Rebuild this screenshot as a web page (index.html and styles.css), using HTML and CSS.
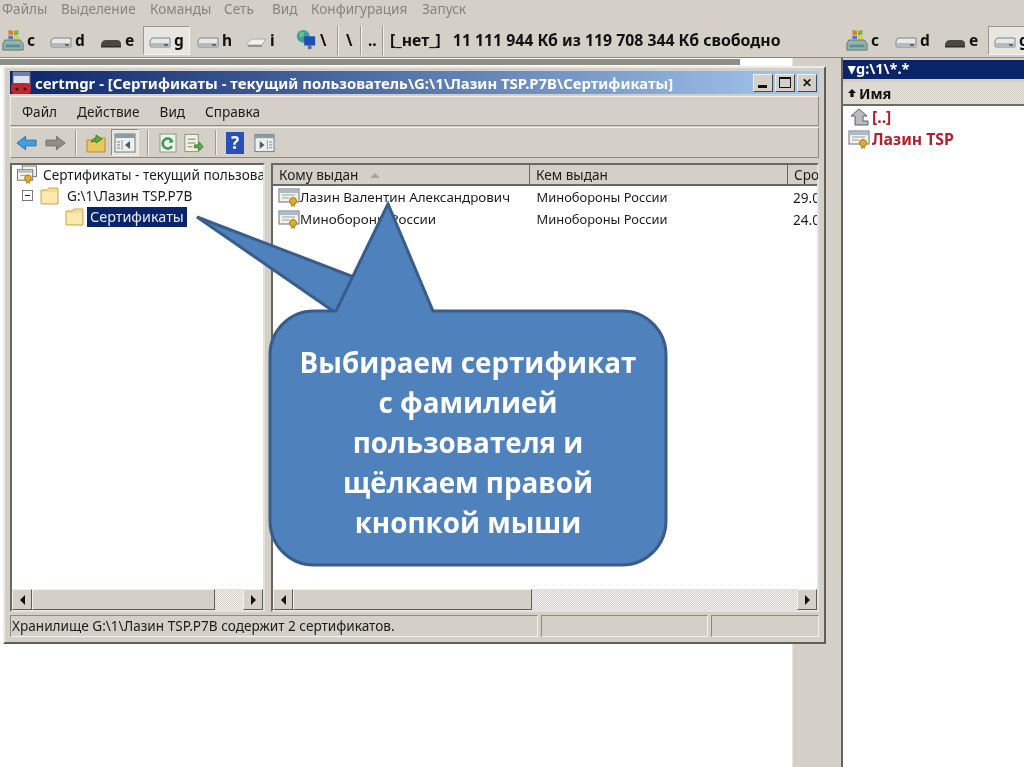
FILE: index.html
```html
<!DOCTYPE html>
<html lang="ru">
<head>
  <meta charset="UTF-8">
  <title>certmgr</title>
  <link rel="stylesheet" href="styles.css">
</head>
<body>

  <!-- иконки -->
  <svg class="defs" width="0" height="0">
    <symbol id="ic-drive" viewBox="0 0 22 12">
      <path d="M1 4 L3 1 H21 V10 H2 L1 9 Z" fill="#e8e8e4" stroke="#7d8488"/>
      <rect x="2" y="6" width="19" height="4" fill="#b4bbc0"/>
      <rect x="15" y="7" width="4" height="2" fill="#5d6f78"/>
    </symbol>
    <symbol id="ic-flat" viewBox="0 0 22 12">
      <path d="M1 7 L7 2 H21 L17 8 H3 Z" fill="#eef0ee" stroke="#a5adb0"/>
      <path d="M3 9 H17" stroke="#8d9598" stroke-width="2"/>
    </symbol>
    <symbol id="ic-dark" viewBox="0 0 22 12">
      <path d="M2 5 Q3 3 6 3 H17 Q20 3 21 6 V10 H1 V7 Z" fill="#4a4845"/>
      <rect x="1" y="9" width="20" height="1.5" fill="#2e2c2a"/>
    </symbol>
    <symbol id="ic-win" viewBox="0 0 24 24">
      <path d="M7 1 L12 2 V7 L7 6 Z" fill="#d9803a"/>
      <path d="M13 2 L18 1 V6 L13 7 Z" fill="#7fb04a"/>
      <path d="M7 7 L12 8 V11 L7 11 Z" fill="#4a7ec2"/>
      <path d="M13 8 L18 7 V11 H13 Z" fill="#e8c24a"/>
      <path d="M3 12 H20 L23 16 V23 H1 V16 Z" fill="#93b4a8" stroke="#55776c"/>
      <rect x="4" y="17" width="16" height="3" fill="#5d8aa0"/>
    </symbol>
    <symbol id="ic-cert" viewBox="0 0 22 19">
      <rect x="1" y="1" width="20" height="13" fill="#f4f2e6" stroke="#6b7378"/>
      <rect x="2" y="2" width="18" height="3" fill="#a9bccb"/>
      <path d="M4 7 H17 M4 10 H11" stroke="#98a0a4"/>
      <circle cx="15" cy="13" r="3.5" fill="#e2ad2e" stroke="#a87a14"/>
      <path d="M13 16 V19 L15 18 L17 19 V16" fill="#c8922a"/>
    </symbol>
    <symbol id="ic-certs" viewBox="0 0 22 20">
      <rect x="6" y="1" width="15" height="11" fill="#f4f2e6" stroke="#6b7378"/>
      <rect x="1" y="5" width="16" height="11" fill="#f4f2e6" stroke="#6b7378"/>
      <rect x="2" y="6" width="14" height="2" fill="#a9bccb"/>
      <path d="M4 11 H13" stroke="#98a0a4"/>
      <circle cx="12" cy="14" r="3.5" fill="#e2ad2e" stroke="#a87a14"/>
      <path d="M10 17 V20 L12 19 L14 20 V17" fill="#c8922a"/>
    </symbol>
    <symbol id="ic-folder" viewBox="0 0 20 18">
      <path d="M1 3 H7 L9 1 H18 V17 H1 Z" fill="#f6dc8e" stroke="#c9ab5c"/>
      <path d="M2 5 H17 V16 H2 Z" fill="#fbe9ad"/>
    </symbol>
    <symbol id="ic-pane-l" viewBox="0 0 22 20">
      <rect x="1" y="1" width="20" height="18" fill="#eef0ee" stroke="#6f7c85"/>
      <rect x="1" y="1" width="20" height="4" fill="#8d9ba5"/>
      <path d="M8 7 V17" stroke="#8d9ba5"/>
      <path d="M3 9 H6 M3 12 H6 M3 15 H6" stroke="#6f7c85"/>
      <path d="M16 8 V16 L11 12 Z" fill="#4d5a63"/>
    </symbol>
    <symbol id="ic-pane-r" viewBox="0 0 22 20">
      <rect x="1" y="1" width="20" height="18" fill="#eef0ee" stroke="#6f7c85"/>
      <rect x="1" y="1" width="20" height="4" fill="#8d9ba5"/>
      <path d="M14 7 V17" stroke="#8d9ba5"/>
      <path d="M16 9 H19 M16 12 H19 M16 15 H19" stroke="#6f7c85"/>
      <path d="M6 8 V16 L11 12 Z" fill="#4d5a63"/>
    </symbol>
  </svg>

  <div class="desktop">
    <div class="top">
      <div class="menu">
        <span>Файлы</span><span>Выделение</span><span>Команды</span><span>Сеть</span><span>Вид</span><span>Конфигурация</span><span>Запуск</span>
      </div>
      <div class="drives">
        <div class="drive-set">
          <div class="drive d-c"><svg class="ic-win"><use href="#ic-win"/></svg>c</div>
          <div class="drive d-d"><svg class="ic-drv"><use href="#ic-drive"/></svg>d</div>
          <div class="drive d-e"><svg class="ic-drv"><use href="#ic-dark"/></svg>e</div>
          <div class="drive d-g active"><svg class="ic-drv"><use href="#ic-drive"/></svg>g</div>
          <div class="drive d-h"><svg class="ic-drv"><use href="#ic-drive"/></svg>h</div>
          <div class="drive d-i"><svg class="ic-drv"><use href="#ic-flat"/></svg>i</div>
          <div class="drive d-net">
            <svg class="ic-net" viewBox="0 0 24 24">
              <circle cx="9" cy="8" r="7" fill="#3aa0a8"/>
              <path d="M5 4 L10 3 L9 8 L5 9 Z" fill="#7cc46a"/>
              <rect x="10" y="8" width="12" height="10" fill="#1d4fb0"/>
              <rect x="14" y="18" width="4" height="4" fill="#5a6f8a"/>
            </svg>\
          </div>
          <i class="sep"></i>
          <div class="drive d-root">\</div>
          <i class="sep"></i>
          <div class="drive d-up">..</div>
          <i class="sep"></i>
          <div class="free">[_нет_]</div>
          <div class="free free-size">11 111 944 Кб из 119 708 344 Кб свободно</div>
        </div>
        <div class="drive-set right-set">
          <div class="drive d-c"><svg class="ic-win"><use href="#ic-win"/></svg>c</div>
          <div class="drive d-d2"><svg class="ic-drv"><use href="#ic-drive"/></svg>d</div>
          <div class="drive d-e2"><svg class="ic-drv"><use href="#ic-dark"/></svg>e</div>
          <div class="drive d-g2 active"><svg class="ic-drv"><use href="#ic-drive"/></svg>g</div>
        </div>
      </div>
    </div>

    <div class="panels">
      <div class="panel-left"><div class="tab-strip"></div></div>
      <div class="panel-gap"></div>
      <div class="panel-right">
        <div class="path-bar">▾g:\1\*.*</div>
        <div class="name-head"><svg class="name-arrow" viewBox="0 0 10 12"><path d="M5 1 L10 6 H7 V11 H3 V6 H0 Z" fill="#111"/></svg>Имя</div>
        <div class="file-row"><svg class="ic-up" viewBox="0 0 20 18"><path d="M10 1 L18 8 H14 V13 H19 V17 H6 V8 H2 Z" fill="#b8bcbc" stroke="#5b6063"/></svg>[..]</div>
        <div class="file-row"><svg class="ic-cert"><use href="#ic-cert"/></svg>Лазин TSP</div>
      </div>
    </div>

    <!-- окно certmgr -->
    <div class="window">
      <div class="title">
        <svg class="title-icon" viewBox="0 0 24 24">
          <rect x="3" y="1" width="17" height="14" fill="#dfe4ea" stroke="#5e6c80"/>
          <rect x="3" y="1" width="17" height="4" fill="#6d84a8"/>
          <rect x="1" y="12" width="20" height="11" rx="4" fill="#c4242c"/>
          <circle cx="7" cy="18" r="1.5" fill="#222"/>
          <circle cx="15" cy="18" r="1.5" fill="#222"/>
        </svg>
        <span class="title-text">certmgr - [Сертификаты - текущий пользователь\G:\1\Лазин TSP.P7B\Сертификаты]</span>
        <div class="title-btns">
          <div class="tbtn"><i class="tb-min"></i></div>
          <div class="tbtn"><i class="tb-max"></i></div>
          <div class="tbtn tbtn-close">✕</div>
        </div>
      </div>

      <div class="win-menu">
        <span>Файл</span><span>Действие</span><span>Вид</span><span>Справка</span>
      </div>

      <div class="win-tools">
        <svg class="t-arrow" viewBox="0 0 22 18"><path d="M1 9 L10 2 V6 H21 V12 H10 V16 Z" fill="#3f9fe0" stroke="#2b6ea8"/></svg>
        <svg class="t-arrow" viewBox="0 0 22 18"><path d="M21 9 L12 2 V6 H1 V12 H12 V16 Z" fill="#8f8f8b" stroke="#6c6c68"/></svg>
        <i class="t-sep"></i>
        <svg class="t-icon" viewBox="0 0 20 20"><path d="M1 7 H8 L10 5 H19 V19 H1 Z" fill="#e9c65e" stroke="#b08f36"/><path d="M5 9 Q7 5 10 5 V2 L16 6 L10 10 V8 Q8 8 5 9 Z" fill="#5fa83c" stroke="#3f7a26"/></svg>
        <div class="t-pressed"><svg class="t-icon-in"><use href="#ic-pane-l"/></svg></div>
        <i class="t-sep"></i>
        <svg class="t-icon" viewBox="0 0 20 20"><rect x="2" y="1" width="16" height="18" fill="#eef2ea" stroke="#8a9a90"/><path d="M14 8 A5 5 0 1 0 14 13" fill="none" stroke="#3c9a48" stroke-width="2.5"/><path d="M12 5 L16 9 L11 10 Z" fill="#3c9a48"/></svg>
        <svg class="t-icon t-export" viewBox="0 0 22 20"><rect x="2" y="1" width="14" height="18" fill="#f4f2dc" stroke="#8a9080"/><path d="M5 6 H13 M5 10 H13 M5 14 H10" stroke="#6c7a70"/><path d="M12 12 H17 V9 L21 14 L17 18 V15 H12 Z" fill="#58b048" stroke="#3a8030"/></svg>
        <i class="t-sep"></i>
        <div class="t-help">?</div>
        <svg class="t-icon t-export"><use href="#ic-pane-r"/></svg>
      </div>

      <div class="panes">
        <div class="tree pane">
          <div class="pane-body">
            <div class="tree-row"><svg class="ic-cert"><use href="#ic-certs"/></svg><span>Сертификаты - текущий пользова</span></div>
            <div class="tree-row tree-l1"><i class="minus"></i><svg class="ic-folder"><use href="#ic-folder"/></svg><span>G:\1\Лазин TSP.P7B</span></div>
            <div class="tree-row tree-l2"><svg class="ic-folder"><use href="#ic-folder"/></svg><span class="selected">Сертификаты</span></div>
          </div>
          <div class="hscroll">
            <div class="sb-btn"><i class="arrow-l"></i></div>
            <div class="sb-thumb thumb-left"></div>
            <div class="sb-track"></div>
            <div class="sb-btn"><i class="arrow-r"></i></div>
          </div>
        </div>

        <div class="list pane">
          <div class="list-head">
            <div class="col col1">Кому выдан <i class="sort"></i></div>
            <div class="col col2">Кем выдан</div>
            <div class="col col3">Сро</div>
          </div>
          <div class="pane-body">
            <div class="list-row">
              <div class="cell col1"><svg class="ic-cert"><use href="#ic-cert"/></svg>Лазин Валентин Александрович</div>
              <div class="cell col2">Минобороны России</div>
              <div class="cell col3">29.0</div>
            </div>
            <div class="list-row">
              <div class="cell col1"><svg class="ic-cert"><use href="#ic-cert"/></svg>Минобороны России</div>
              <div class="cell col2">Минобороны России</div>
              <div class="cell col3">24.0</div>
            </div>
          </div>
          <div class="hscroll">
            <div class="sb-btn"><i class="arrow-l"></i></div>
            <div class="sb-thumb thumb-right"></div>
            <div class="sb-track"></div>
            <div class="sb-btn"><i class="arrow-r"></i></div>
          </div>
        </div>
      </div>

      <div class="status">
        <div class="st st1">Хранилище G:\1\Лазин TSP.P7B содержит 2 сертификатов.</div>
        <div class="st st2"></div>
        <div class="st st3"></div>
      </div>
    </div>

    <!-- выноска -->
    <svg class="callout-shape" width="1024" height="767" viewBox="0 0 1024 767">
      <path d="M197 217 L354 277 L420 320 L336 313 Z" fill="#4f81bd" stroke="#385d8a" stroke-width="3" stroke-linejoin="miter"/>
      <path d="M314 311 H336 L388 204 L433 311 H622 A44 44 0 0 1 666 355 V521 A44 44 0 0 1 622 565 H314 A44 44 0 0 1 270 521 V355 A44 44 0 0 1 314 311 Z" fill="#4f81bd" stroke="#385d8a" stroke-width="3"/>
    </svg>
    <div class="callout-text">Выбираем сертификат<br>с фамилией<br>пользователя и<br>щёлкаем правой<br>кнопкой мыши</div>
  </div>

</body>
</html>
```

FILE: styles.css
```css
* {
  margin: 0;
  padding: 0;
  box-sizing: border-box;
}

html, body {
  width: 1024px;
  height: 767px;
  overflow: hidden;
  background: #fff;
}

.defs {
  position: absolute;
}

.desktop {
  position: relative;
  width: 1024px;
  height: 767px;
  display: flex;
  flex-direction: column;
  font-family: "Noto Sans", Tahoma, sans-serif;
  font-size: 13.6px;
  color: #1c1c1c;
  overflow: hidden;
  filter: blur(0.4px);
}

/* Верхняя панель файлового менеджера */
.top {
  background: #d4d0c8;
  height: 58px;
  border-bottom: 1px solid #8d8a84;
  flex: none;
}

.menu {
  display: flex;
  height: 19px;
  padding-left: 2px;
  color: #86847e;
  line-height: 17px;
}

.menu span:nth-child(1) { width: 59px; }
.menu span:nth-child(2) { width: 89px; }
.menu span:nth-child(3) { width: 74px; }
.menu span:nth-child(4) { width: 48px; }
.menu span:nth-child(5) { width: 39px; }
.menu span:nth-child(6) { width: 111px; }

.drives {
  display: flex;
  height: 34px;
  margin-top: 4px;
}

.drive-set {
  display: flex;
  align-items: center;
  width: 844px;
  flex: none;
}

.right-set {
  width: 180px;
  overflow: hidden;
}

.drive {
  display: flex;
  align-items: center;
  height: 29px;
  font-weight: 700;
  font-size: 15.5px;
  color: #111;
  flex: none;
}

.drive.active {
  background: #e8e6e0;
  border: 1px solid;
  border-color: #9a9890 #f6f5f1 #f6f5f1 #9a9890;
  padding-left: 5px;
}

.ic-win { width: 22px; height: 24px; margin-right: 3px; flex: none; }
.ic-net { width: 22px; height: 24px; margin-right: 3px; flex: none; }
.ic-drv { width: 22px; height: 12px; margin: 6px 3px 0 0; flex: none; }

.d-c { margin-left: 2px; width: 48px; }
.d-d { width: 50px; }
.d-e { width: 43px; }
.d-g { width: 47px; }
.d-h { width: 54px; margin-left: 7px; }
.d-i { width: 50px; margin-left: -6px; }
.d-net { width: 41px; }
.d-root { width: 13px; margin-left: 7px; }
.d-up { width: 13px; margin-left: 6px; }
.d-d2 { width: 49px; margin-left: 1px; }
.d-e2 { width: 44px; }
.d-g2 { width: 60px; }

.sep {
  width: 2px;
  height: 29px;
  flex: none;
  margin-left: 1px;
  background: #9d9a94;
  border-right: 1px solid #f2f1ec;
}

.free {
  font-weight: 700;
  font-size: 15.8px;
  color: #111;
  margin-left: 6px;
  white-space: nowrap;
}

.free-size {
  margin-left: 12px;
}

/* Панели за окном */
.panels {
  flex: 1;
  display: flex;
}

.panel-left {
  width: 793px;
  padding-top: 1px;
  background: #fff;
  border-right: 1px solid #e8e6e0;
}

.tab-strip {
  width: 740px;
  height: 6px;
  background: #8f8d88;
}

.panel-gap {
  width: 50px;
  background: #d4d0c8;
  border-right: 2px solid #67655f;
}

.panel-right {
  flex: 1;
  background: #fff;
}

.path-bar {
  height: 21px;
  background: #0a246a;
  border-top: 2px solid #d4d0c8;
  color: #fff;
  font-size: 14.5px;
  font-weight: 700;
  line-height: 17px;
  padding-left: 5px;
}

.name-head {
  display: flex;
  align-items: center;
  height: 27px;
  background: repeating-conic-gradient(#d4d0c8 0 25%, #e6e4de 0 50%) 0 0 / 2px 2px;
  border-top: 3px solid #d4d0c8;
  border-bottom: 2px solid #6e6c66;
  font-weight: 700;
  font-size: 14.5px;
  padding-left: 5px;
  color: #111;
}

.name-arrow {
  width: 8px;
  height: 10px;
  margin-right: 3px;
  flex: none;
}

.file-row {
  display: flex;
  align-items: center;
  height: 22px;
  padding-left: 5px;
  color: #b3202c;
  font-weight: 700;
  font-size: 15.8px;
  gap: 2px;
}

.ic-up { width: 22px; height: 18px; flex: none; }
.ic-cert { width: 22px; height: 19px; flex: none; }

/* Окно certmgr */
.window {
  position: absolute;
  left: 3px;
  top: 66px;
  width: 823px;
  height: 578px;
  background: #d4d0c8;
  border: 2px solid;
  border-color: #eceae4 #5f5d58 #5f5d58 #eceae4;
  padding: 3px 5px 5px 5px;
  display: flex;
  flex-direction: column;
}

.title {
  height: 23px;
  flex: none;
  display: flex;
  align-items: center;
  background: linear-gradient(to right, #0a246a, #a6caf0);
  color: #fff;
  font-size: 14.9px;
  font-weight: 700;
}

.title-icon {
  width: 24px;
  height: 24px;
  flex: none;
  margin-right: 1px;
}

.title-text {
  flex: 1;
  white-space: nowrap;
  overflow: hidden;
}

.title-btns {
  display: flex;
  gap: 2px;
  margin-right: 2px;
}

.tbtn {
  width: 20px;
  height: 18px;
  background: #d4d0c8;
  border: 1px solid;
  border-color: #f2f1ec #4c4a46 #4c4a46 #f2f1ec;
  position: relative;
  font-size: 12px;
  font-weight: 700;
  line-height: 16px;
  text-align: center;
  color: #111;
}

.tb-min {
  position: absolute;
  left: 4px;
  bottom: 3px;
  width: 9px;
  height: 3px;
  background: #111;
}

.tb-max {
  position: absolute;
  left: 3px;
  top: 2px;
  width: 12px;
  height: 11px;
  border: 1px solid #111;
  border-top-width: 2px;
}

.win-menu {
  height: 30px;
  flex: none;
  margin-top: 2px;
  display: flex;
  align-items: center;
  padding-left: 11px;
  border: 1px solid;
  border-color: #f0efe9 #8d8a84 #8d8a84 #f0efe9;
}

.win-menu span { margin-right: 20px; }

.win-tools {
  height: 31px;
  flex: none;
  margin-top: 1px;
  display: flex;
  align-items: center;
  padding-left: 5px;
  border: 1px solid;
  border-color: #f0efe9 #8d8a84 #8d8a84 #f0efe9;
}

.t-arrow { width: 21px; height: 18px; margin-right: 8px; flex: none; }
.t-icon { width: 20px; height: 20px; flex: none; margin-right: 5px; }
.t-export { margin-right: 10px; width: 21px; }

.t-sep {
  width: 2px;
  height: 25px;
  flex: none;
  background: #9d9a94;
  border-right: 1px solid #f2f1ec;
  margin: 0 9px 0 1px;
}

.t-pressed {
  width: 28px;
  height: 27px;
  flex: none;
  background: #e8e6e0;
  border: 1px solid;
  border-color: #8d8a84 #f2f1ec #f2f1ec #8d8a84;
  display: flex;
  align-items: center;
  justify-content: center;
  margin-right: 7px;
}

.t-icon-in { width: 22px; height: 20px; }

.t-help {
  width: 18px;
  height: 22px;
  flex: none;
  margin-right: 10px;
  background: #2a4fb8;
  color: #fff;
  font-weight: 700;
  font-size: 17px;
  line-height: 22px;
  text-align: center;
}

.panes {
  flex: 1;
  display: flex;
  gap: 6px;
  margin-top: 5px;
  min-height: 0;
}

.pane {
  display: flex;
  flex-direction: column;
  background: #fff;
  border: 2px solid;
  border-color: #6a6862 #e4e2dc #e4e2dc #6a6862;
  min-width: 0;
}

.tree { width: 255px; flex: none; }
.list { flex: 1; }

.pane-body {
  flex: 1;
  overflow: hidden;
}

.tree-row {
  display: flex;
  align-items: center;
  height: 21px;
  white-space: nowrap;
  overflow: hidden;
  padding-left: 4px;
  gap: 5px;
}

.tree-row:first-child { margin-top: -1px; }
.tree-l1 { padding-left: 10px; gap: 7px; }
.tree-l2 { padding-left: 53px; gap: 2px; }

.minus {
  width: 11px;
  height: 11px;
  flex: none;
  border: 1px solid #7a7a7a;
  position: relative;
}

.minus::after {
  content: "";
  position: absolute;
  left: 2px;
  top: 4px;
  width: 5px;
  height: 1px;
  background: #222;
}

.ic-folder { width: 20px; height: 18px; flex: none; }

.selected {
  background: #0a246a;
  color: #e8ecf4;
  padding: 0 3px;
  font-size: 14.4px;
  line-height: 20px;
}

.list-head {
  display: flex;
  height: 21px;
  flex: none;
  background: #d4d0c8;
  border-bottom: 2px solid #6a6862;
}

.col {
  flex: none;
  line-height: 19px;
  padding-left: 6px;
  border-right: 1px solid #6a6862;
  white-space: nowrap;
  overflow: hidden;
}

.col1 { width: 257px; }
.col2 { width: 258px; }
.col3 { width: 30px; border-right: 0; }

.sort {
  display: inline-block;
  margin-left: 8px;
  vertical-align: 2px;
  border: 5px solid transparent;
  border-top: 0;
  border-bottom-color: #a8a59e;
}

.list-row {
  display: flex;
  height: 22px;
  align-items: center;
}

.cell {
  display: flex;
  align-items: center;
  border-right: 0;
  white-space: nowrap;
  overflow: hidden;
  padding-left: 6px;
}

.cell.col1 { padding-left: 5px; font-size: 13.4px; }
.cell.col2 { padding-left: 7px; font-size: 12.9px; }

.hscroll {
  height: 21px;
  flex: none;
  display: flex;
  background: repeating-conic-gradient(#d4d0c8 0 25%, #f4f3ef 0 50%) 0 0 / 2px 2px;
}

.sb-btn, .sb-thumb {
  background: #d4d0c8;
  border: 1px solid;
  border-color: #f2f1ec #5f5d58 #5f5d58 #f2f1ec;
  flex: none;
}

.sb-btn {
  width: 20px;
  display: flex;
  align-items: center;
  justify-content: center;
}

.arrow-l, .arrow-r {
  border: 5px solid transparent;
}

.arrow-l { border-left: 0; border-right-color: #111; }
.arrow-r { border-right: 0; border-left-color: #111; }

.thumb-left { width: 183px; }
.thumb-right { width: 239px; }
.sb-track { flex: 1; }

.status {
  height: 22px;
  flex: none;
  margin-top: 3px;
  display: flex;
  gap: 3px;
}

.st {
  border: 1px solid;
  border-color: #8d8a84 #f2f1ec #f2f1ec #8d8a84;
  line-height: 20px;
  padding-left: 1px;
  white-space: nowrap;
  overflow: hidden;
}

.st1 { width: 529px; }
.st2 { width: 167px; }
.st3 { width: 108px; }

/* Выноска поверх окна */
.callout-shape {
  position: absolute;
  left: 0;
  top: 0;
}

.callout-text {
  position: absolute;
  left: 285px;
  top: 342px;
  width: 366px;
  color: #fff;
  font-family: "Open Sans", "Noto Sans", sans-serif;
  font-size: 27.8px;
  font-weight: 700;
  line-height: 40px;
  text-align: center;
}
```
